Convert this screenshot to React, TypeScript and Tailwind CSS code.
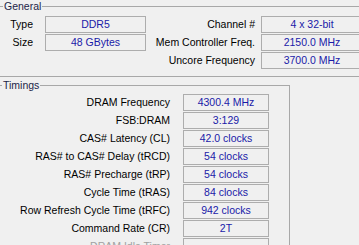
import React from "react";

const general = [
  { l: "Type", v: "DDR5" },
  { l: "Size", v: "48 GBytes" },
];
const generalRight = [
  { l: "Channel #", v: "4 x 32-bit" },
  { l: "Mem Controller Freq.", v: "2150.0 MHz" },
  { l: "Uncore Frequency", v: "3700.0 MHz" },
];
const timings = [
  { l: "DRAM Frequency", v: "4300.4 MHz" },
  { l: "FSB:DRAM", v: "3:129" },
  { l: "CAS# Latency (CL)", v: "42.0 clocks" },
  { l: "RAS# to CAS# Delay (tRCD)", v: "54 clocks" },
  { l: "RAS# Precharge (tRP)", v: "54 clocks" },
  { l: "Cycle Time (tRAS)", v: "84 clocks" },
  { l: "Row Refresh Cycle Time (tRFC)", v: "942 clocks" },
  { l: "Command Rate (CR)", v: "2T" },
];

export default function App() {
  return (
    <div className="w-[359px] h-[245px] overflow-hidden bg-[#f0f0f0] font-['Liberation_Sans',Arial,sans-serif] text-[10.5px] leading-[13px] text-black">
      {/* General */}
      <div className="relative mt-[6px] h-[71px] border-y border-[#a8a8a8]">
        <span className="absolute left-[3px] top-[-7px] bg-[#f0f0f0] px-[1px] text-[#1c2548]">General</span>
        <div className="flex pt-[9px]">
          <div className="flex w-[146px] shrink-0 flex-col gap-[1px]">
            {general.map((r) => (
              <div key={r.l} className="flex h-[17px] items-center">
                <span className="w-[33px] shrink-0 text-right">{r.l}</span>
                <div className="ml-[12px] flex h-[17px] w-[101px] shrink-0 items-center justify-center border border-[#adadad] text-[#1a1aa8]">
                  {r.v}
                </div>
              </div>
            ))}
          </div>
          <div className="flex shrink-0 flex-col gap-[1px]">
            {generalRight.map((r) => (
              <div key={r.l} className="flex h-[17px] items-center">
                <span className="w-[109px] shrink-0 text-right">{r.l}</span>
                <div className="ml-[6px] flex h-[17px] w-[102px] shrink-0 items-center justify-center border border-[#adadad] text-[#1a1aa8]">
                  {r.v}
                </div>
              </div>
            ))}
          </div>
        </div>
      </div>

      {/* Timings */}
      <div className="relative mt-[8px] h-[200px] w-[290px] border-t border-r border-[#a8a8a8] pt-[8px]">
        <span className="absolute left-[2px] top-[-7px] bg-[#f0f0f0] px-[1px] text-[#1c2548]">Timings</span>
        <div className="flex flex-col gap-[1px]">
          {timings.map((r) => (
            <div key={r.l} className="flex h-[17px] items-center">
              <span className="w-[170px] shrink-0 text-right">{r.l}</span>
              <div className="ml-[13px] flex h-[17px] w-[86px] shrink-0 items-center justify-center border border-[#adadad] text-[#1a1aa8]">
                {r.v}
              </div>
            </div>
          ))}
          <div className="flex h-[17px] items-center">
            <span className="w-[170px] shrink-0 text-right text-[#a0a0a0]">DRAM Idle Timer</span>
            <div className="ml-[13px] h-[17px] w-[86px] shrink-0 border border-[#adadad]" />
          </div>
        </div>
      </div>
    </div>
  );
}
